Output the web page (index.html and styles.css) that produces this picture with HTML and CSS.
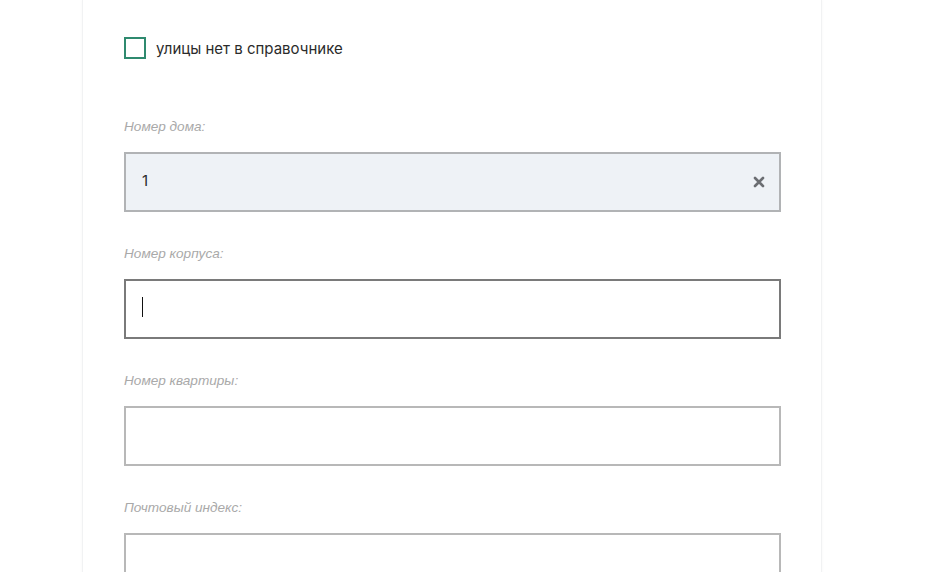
FILE: index.html
```html
<!DOCTYPE html>
<html lang="ru">
<head>
<meta charset="utf-8">
<title>Адрес</title>
<link rel="stylesheet" href="styles.css">
</head>
<body>
<div class="card">
  <label class="check-row">
    <span class="checkbox"></span>
    <span class="check-text">улицы нет в справочнике</span>
  </label>

  <div class="field">
    <div class="field-label">Номер дома:</div>
    <div class="input filled">
      <span class="value">1</span>
      <svg class="clear" width="12" height="12" viewBox="0 0 12 12"><path d="M2 2 L10 10 M10 2 L2 10" stroke="#6b6e72" stroke-width="2.6" stroke-linecap="round"/></svg>
    </div>
  </div>

  <div class="field">
    <div class="field-label">Номер корпуса:</div>
    <div class="input focused"><span class="caret"></span></div>
  </div>

  <div class="field">
    <div class="field-label">Номер квартиры:</div>
    <div class="input"></div>
  </div>

  <div class="field">
    <div class="field-label">Почтовый индекс:</div>
    <div class="input"></div>
  </div>
</div>
</body>
</html>
```
FILE: styles.css
```css
html, body {
  margin: 0;
  padding: 0;
  background: #ffffff;
  font-family: "Inter", "Noto Sans", sans-serif;
  color: #2b2b2b;
  overflow: hidden;
  height: 572px;
}

.card {
  margin-left: 82px;
  width: 740px;
  border: 1px solid #f1f2f3;
  border-top: none;
  box-shadow: 0 0 3px rgba(0, 0, 0, 0.04);
  padding: 37px 0 40px 41px;
  box-sizing: border-box;
  background: #fff;
  min-height: 700px;
}

.check-row {
  display: flex;
  align-items: center;
  gap: 10px;
  height: 22px;
}

.checkbox {
  width: 22px;
  height: 22px;
  box-sizing: border-box;
  border: 2px solid #2f8a6f;
  background: #fff;
}

.check-text {
  font-size: 15px;
  color: #2b2b2b;
}

.field {
  margin-top: 34px;
}

.check-row + .field {
  margin-top: 60px;
}

.field-label {
  font-family: "Liberation Sans", Arial, sans-serif;
  font-style: italic;
  font-size: 13.6px;
  line-height: 16px;
  color: #a9a9a9;
  margin-bottom: 17px;
}

.input {
  width: 657px;
  height: 60px;
  box-sizing: border-box;
  border: 2px solid #b8b8b8;
  background: #fff;
  display: flex;
  align-items: center;
  padding: 0 16px;
}

.input.filled {
  background: #eef2f6;
  border-color: #b1b3b5;
  justify-content: space-between;
}

.input.focused {
  border-color: #7a7a7a;
}

.value {
  font-size: 15px;
  color: #2b2b2b;
  margin-top: -3px;
}

.clear {
  margin-right: -2px;
}

.caret {
  width: 1px;
  height: 20px;
  background: #111;
  margin-top: -4px;
}
```
